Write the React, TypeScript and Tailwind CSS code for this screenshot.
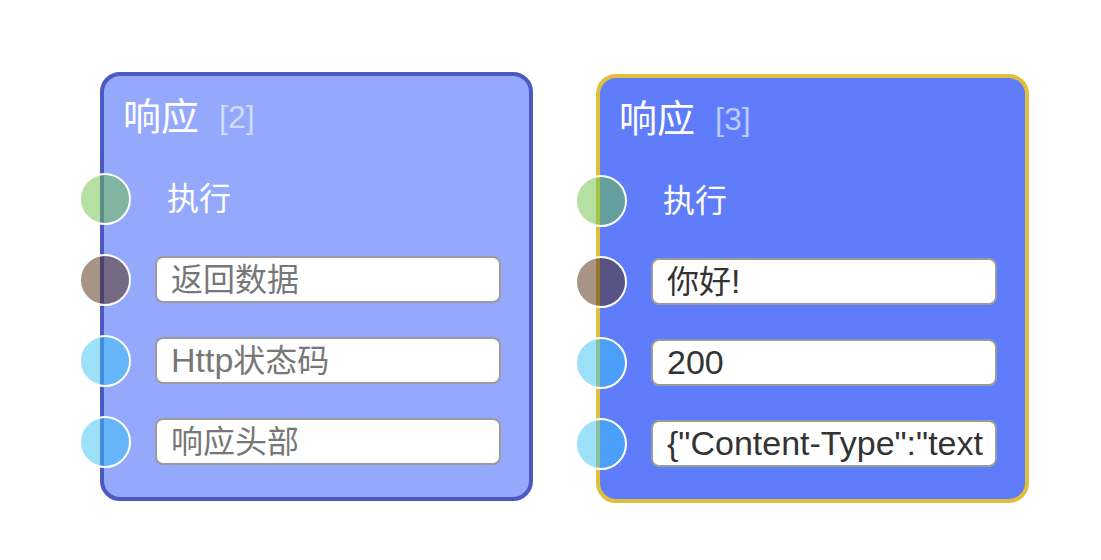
import React from "react";

type Row = {
  kind: "exec" | "field";
  socket: string;
  text: string;
  placeholder?: boolean;
};

const sockets = {
  green: "bg-[rgba(109,193,69,0.5)]",
  brown: "bg-[rgba(81,41,13,0.5)]",
  blue: "bg-[rgba(57,193,245,0.5)]",
};

const nodes = [
  {
    id: 2,
    card: "border-[#4b59c2] bg-[#94a8fc]",
    offset: "mt-0",
    rows: [
      { kind: "exec", socket: sockets.green, text: "执行" },
      { kind: "field", socket: sockets.brown, text: "返回数据", placeholder: true },
      { kind: "field", socket: sockets.blue, text: "Http状态码", placeholder: true },
      { kind: "field", socket: sockets.blue, text: "响应头部", placeholder: true },
    ] as Row[],
  },
  {
    id: 3,
    card: "border-[#e0c03a] bg-[#5f7cfa]",
    offset: "mt-[2px]",
    rows: [
      { kind: "exec", socket: sockets.green, text: "执行" },
      { kind: "field", socket: sockets.brown, text: "你好!" },
      { kind: "field", socket: sockets.blue, text: "200" },
      { kind: "field", socket: sockets.blue, text: '{"Content-Type":"text/html"}' },
    ] as Row[],
  },
];

// latin glyphs sit a bit larger than the CJK ones in the original font
const MixedText = ({ text }: { text: string }) => {
  const parts = text.split(/([\u4e00-\u9fff]+)/).filter(Boolean);
  return (
    <>
      {parts.map((part, i) =>
        /[\u4e00-\u9fff]/.test(part) ? (
          <span key={i} className="text-[32px]">
            {part}
          </span>
        ) : (
          <span key={i} className="text-[34px]">
            {part}
          </span>
        )
      )}
    </>
  );
};

const NodeRow = ({ row }: { row: Row }) => {
  return (
    <div className="relative flex h-[81px] items-center">
      <span
        className={`absolute left-[-25px] top-1/2 h-[52px] w-[52px] -translate-y-1/2 rounded-full border-2 border-white ${row.socket}`}
      />
      {row.kind === "exec" ? (
        <span className="pl-[63px] text-[32px] text-white">{row.text}</span>
      ) : (
        <div
          className={`ml-[51px] flex h-[47px] w-[346px] items-center overflow-hidden rounded-[8px] border-2 border-[#9b9b9b] bg-white pl-[14px] pr-[12px] ${
            row.placeholder ? "text-[#777777]" : "text-[#333333]"
          }`}
        >
          <span className="min-w-0 flex-1 overflow-x-clip whitespace-nowrap pt-[6px] leading-[36px]">
            <MixedText text={row.text} />
          </span>
        </div>
      )}
    </div>
  );
};

export default function App() {
  return (
    <div className="flex min-h-screen gap-[63px] bg-white pl-[100px] pt-[72px] font-['Liberation_Sans','Noto_Sans_CJK_SC',sans-serif]">
      {nodes.map((node) => (
        <div
          key={node.id}
          className={`h-[429px] w-[433px] rounded-[20px] border-4 ${node.card} ${node.offset}`}
        >
          <div className="flex h-[82px] items-center gap-[20px] pl-[19px]">
            <span className="text-[38px] text-white">响应</span>
            <span className="text-[32px] text-white/60">[{node.id}]</span>
          </div>
          {node.rows.map((row, i) => (
            <NodeRow key={i} row={row} />
          ))}
        </div>
      ))}
    </div>
  );
}
